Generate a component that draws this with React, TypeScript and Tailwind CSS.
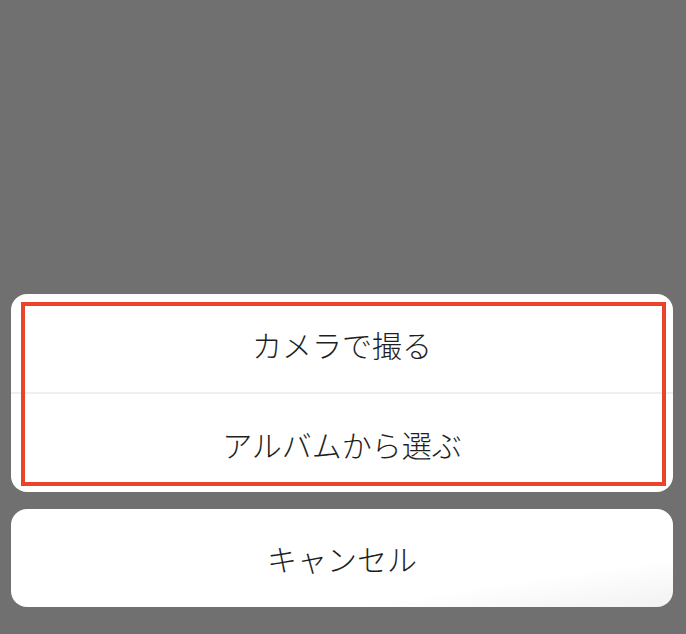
import React from "react";

const ActionSheet: React.FC = () => {
  const options = ["カメラで撮る", "アルバムから選ぶ"];

  return (
    <div
      className="flex h-[634px] w-full flex-col justify-end bg-[#707070] pb-[27px] pl-[11px] pr-[13px]"
      style={{ fontFamily: '"Noto Sans CJK JP", "Noto Sans", sans-serif' }}
    >
      {/* Options */}
      <div className="relative flex flex-col overflow-hidden rounded-[16px] bg-white">
        {options.map((label, index) => (
          <React.Fragment key={index}>
            <button className="flex h-[98px] items-center justify-center pt-[2px] text-[30px] font-light text-[#1e1e1e]">
              {label}
            </button>
            {index < options.length - 1 && <div className="h-[2px] w-full bg-[#efefef]"></div>}
          </React.Fragment>
        ))}

        {/* Highlight */}
        <div className="pointer-events-none absolute bottom-[6px] left-[10px] right-[7px] top-[8px] border-[4px] border-[#e9432b]"></div>
      </div>

      {/* Cancel */}
      <button className="mt-[17px] flex h-[98px] items-center justify-center rounded-[16px] bg-gradient-to-br from-white from-75% to-[#f2f2f2] text-[30px] font-light text-[#1e1e1e]">
        キャンセル
      </button>
    </div>
  );
};

export default function App() {
  return <ActionSheet />;
}
